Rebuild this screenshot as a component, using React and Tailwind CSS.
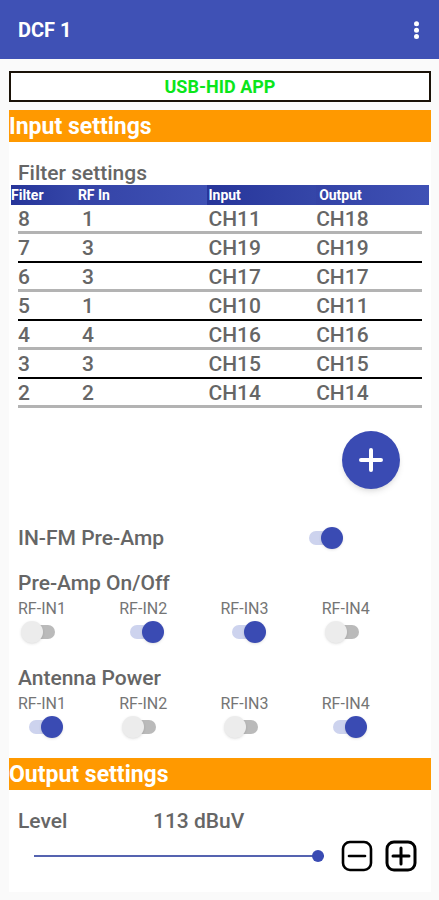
import React, { useState } from "react";

const filters = [
  { id: 8, rfIn: 1, input: "CH11", output: "CH18" },
  { id: 7, rfIn: 3, input: "CH19", output: "CH19" },
  { id: 6, rfIn: 3, input: "CH17", output: "CH17" },
  { id: 5, rfIn: 1, input: "CH10", output: "CH11" },
  { id: 4, rfIn: 4, input: "CH16", output: "CH16" },
  { id: 3, rfIn: 3, input: "CH15", output: "CH15" },
  { id: 2, rfIn: 2, input: "CH14", output: "CH14" },
];

function Toggle({ id, label, defaultChecked }) {
  return (
    <input
      id={id}
      type="checkbox"
      role="switch"
      aria-label={label}
      defaultChecked={defaultChecked}
      className="relative block h-[22px] w-[42px] shrink-0 cursor-pointer appearance-none before:absolute before:top-1 before:left-2 before:h-3.5 before:w-[26px] before:rounded-full before:bg-[#bababa] after:absolute after:top-0 after:left-0 after:size-[22px] after:rounded-full after:bg-[#ececec] after:shadow-sm checked:before:bg-[#cdd3ee] checked:after:left-5 checked:after:bg-[#3a4bb3]"
    />
  );
}

function SwitchGroup({ title, name, values }) {
  return (
    <fieldset>
      <legend className="text-[21px] leading-6 font-medium">{title}</legend>
      <div className="grid grid-cols-4">
        {values.map((on, i) => (
          <div key={i}>
            <label
              htmlFor={`${name}-${i + 1}`}
              className="block pt-0.5 text-base leading-6 text-[#757575]"
            >
              RF-IN{i + 1}
            </label>
            <div className="px-[3px]">
              <Toggle
                id={`${name}-${i + 1}`}
                label={`${title} RF-IN${i + 1}`}
                defaultChecked={on}
              />
            </div>
          </div>
        ))}
      </div>
    </fieldset>
  );
}

function SectionTitle({ children }) {
  return (
    <h2 className="bg-[#ff9900] pt-0.5 text-[23px] leading-[30px] font-bold text-white">
      {children}
    </h2>
  );
}

function FilterTable() {
  return (
    <table className="w-full table-fixed border-collapse text-left">
      <thead>
        <tr className="h-5 text-sm leading-5 text-white">
          <th className="w-[16%] bg-linear-to-r from-[#27359a] to-[#3546a8] p-0 font-bold">
            Filter
          </th>
          <th className="w-[31%] bg-linear-to-r from-[#3443a6] to-[#3f51b5] p-0 font-bold">
            RF In
          </th>
          <th className="w-[26%] bg-linear-to-r from-[#27359a] to-[#3546a8] p-0 pl-px font-bold">
            Input
          </th>
          <th className="bg-linear-to-r from-[#3443a6] to-[#3f51b5] p-0 pl-[3px] font-bold">
            Output
          </th>
        </tr>
      </thead>
      <tbody className="text-[21px] font-medium">
        {filters.map((row, i) => {
          const line =
            i % 2 === 0
              ? "h-[29px] leading-7 border-b-3 border-[#b3b3b3]"
              : "h-[29px] leading-7 border-b-2 border-black";
          return (
            <tr key={row.id}>
              <td className="p-0 pl-[7px]">
                <div className={line}>{row.id}</div>
              </td>
              <td className="p-0">
                <div className={`${line} pl-1`}>{row.rfIn}</div>
              </td>
              <td className="p-0">
                <div className={`${line} pl-px`}>{row.input}</div>
              </td>
              <td className="p-0 pr-[7px]">
                <div className={line}>{row.output}</div>
              </td>
            </tr>
          );
        })}
      </tbody>
    </table>
  );
}

export default function App() {
  const [level, setLevel] = useState(113);

  return (
    <div className="min-h-screen bg-[#fafafa] pb-2 font-['Roboto',sans-serif] text-[#666666]">
      <header className="flex h-[59px] items-center justify-between bg-[#3f51b5] pr-2 pl-[18px] text-white">
        <h1 className="text-[20px] leading-6 font-bold">DCF 1</h1>
        <button type="button" aria-label="More options" className="p-1">
          <svg className="h-6 w-[21px]" viewBox="0 0 21 24" fill="currentColor">
            <circle cx="10.5" cy="5.8" r="2.5" />
            <circle cx="10.5" cy="12.2" r="2.5" />
            <circle cx="10.5" cy="18.6" r="2.5" />
          </svg>
        </button>
      </header>

      <main className="px-2 pl-[9px]">
        <p className="mt-3 border-2 border-[#1a1208] bg-white pt-px text-center text-[18px] leading-[26px] font-bold text-[#0ae61a]">
          USB-HID APP
        </p>

        <div className="mt-2 bg-white">
          <SectionTitle>Input settings</SectionTitle>

          <h3 className="mt-[19px] px-[9px] text-[21px] leading-6 font-medium">
            Filter settings
          </h3>
          <div className="px-0.5">
            <FilterTable />
          </div>

          <div className="mt-[23px] flex justify-end pr-[31px]">
            <button
              type="button"
              aria-label="Add filter"
              className="flex size-[58px] items-center justify-center rounded-full bg-[#3a4bb3] text-white shadow-md"
            >
              <svg
                className="size-6"
                viewBox="0 0 24 24"
                fill="none"
                stroke="currentColor"
                strokeWidth="4"
                strokeLinecap="round"
              >
                <path d="M12 2v20M2 12h20" />
              </svg>
            </button>
          </div>

          <div className="mt-[37px] flex items-center justify-between pr-[88px] pl-[9px]">
            <label htmlFor="fm-preamp" className="text-[21px] leading-6 font-medium">
              IN-FM Pre-Amp
            </label>
            <Toggle id="fm-preamp" label="IN-FM Pre-Amp" defaultChecked />
          </div>

          <div className="mt-[21px] space-y-[23px] pr-2 pl-[9px]">
            <SwitchGroup
              title="Pre-Amp On/Off"
              name="preamp"
              values={[false, true, true, false]}
            />
            <SwitchGroup
              title="Antenna Power"
              name="antenna"
              values={[true, false, false, true]}
            />
          </div>

          <div className="mt-5">
            <SectionTitle>Output settings</SectionTitle>
          </div>

          <div className="mt-[19px] flex pl-[9px] text-[21px] leading-6 font-medium">
            <label htmlFor="level" className="w-[135px]">
              Level
            </label>
            <output htmlFor="level">{level} dBuV</output>
          </div>

          <div className="mt-[7px] flex items-center pr-3.5 pb-5 pl-[25px]">
            <input
              id="level"
              type="range"
              min="60"
              max="113"
              value={level}
              onChange={(e) => setLevel(Number(e.target.value))}
              className="mr-[17px] h-3 min-w-0 flex-1 appearance-none bg-transparent [&::-webkit-slider-runnable-track]:h-0.5 [&::-webkit-slider-runnable-track]:bg-[#5563b0] [&::-webkit-slider-thumb]:-mt-[5px] [&::-webkit-slider-thumb]:size-3 [&::-webkit-slider-thumb]:appearance-none [&::-webkit-slider-thumb]:rounded-full [&::-webkit-slider-thumb]:bg-[#3a4bb3]"
            />
            <button
              type="button"
              aria-label="Decrease level"
              onClick={() => setLevel(Math.max(60, level - 1))}
              className="mr-3 text-black"
            >
              <svg className="size-8" viewBox="0 0 32 32" fill="none" stroke="currentColor" strokeWidth="2.6">
                <rect x="2" y="2" width="28" height="28" rx="7" />
                <path d="M8 16h16" strokeLinecap="round" />
              </svg>
            </button>
            <button
              type="button"
              aria-label="Increase level"
              onClick={() => setLevel(Math.min(113, level + 1))}
              className="text-black"
            >
              <svg className="size-8" viewBox="0 0 32 32" fill="none" stroke="currentColor" strokeWidth="3">
                <rect x="2" y="2" width="28" height="28" rx="7" />
                <path d="M8 16h16M16 8v16" strokeLinecap="round" />
              </svg>
            </button>
          </div>
        </div>
      </main>
    </div>
  );
}
